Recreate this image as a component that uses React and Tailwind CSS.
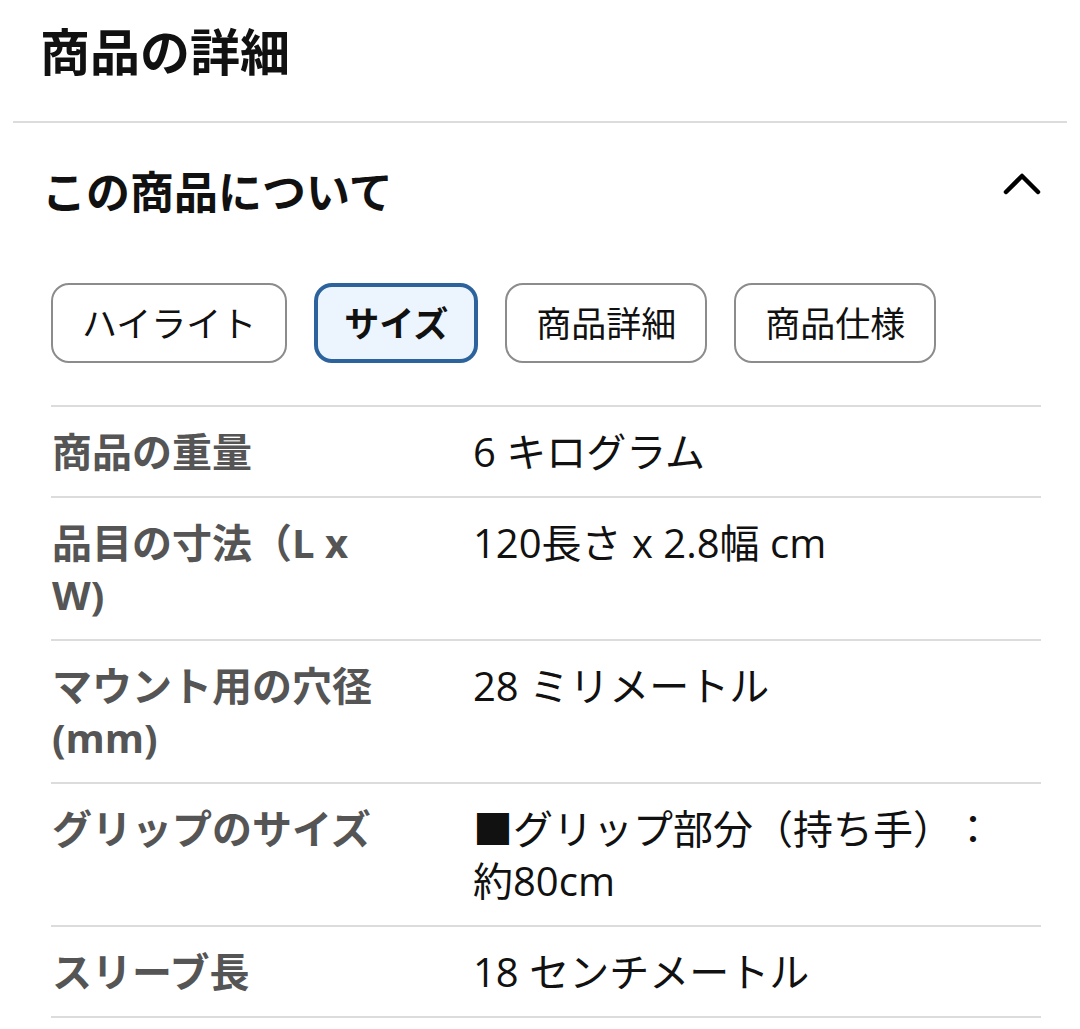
import React from 'react';

const FONT = '"Noto Sans CJK JP", "Noto Sans", sans-serif';
const TABLE_FONT = '"Open Sans", "Noto Sans CJK JP", sans-serif';

const tabs = [
    { label: 'ハイライト', active: false },
    { label: 'サイズ', active: true },
    { label: '商品詳細', active: false },
    { label: '商品仕様', active: false },
];

const rows = [
    { label: '商品の重量', value: '6 キログラム' },
    { label: '品目の寸法（L x W)', value: '120長さ x 2.8幅 cm' },
    { label: 'マウント用の穴径 (mm)', value: '28 ミリメートル' },
    { label: 'グリップのサイズ', value: '■グリップ部分（持ち手）：約80cm' },
    { label: 'スリーブ長', value: '18 センチメートル' },
];

// ─── CHEVRON ──────────────────────────────────────────────────────────────────

function ChevronUp() {
    return (
        <svg width="40" height="24" viewBox="0 0 40 24" fill="none">
            <path d="M3 20 L19 4 L35 20" stroke="#000" strokeWidth="4.5" strokeLinecap="round" strokeLinejoin="round" />
        </svg>
    );
}

// ─── MAIN COMPONENT ───────────────────────────────────────────────────────────

export default function App() {
    return (
        <div className="w-[1080px] min-h-[1029px] bg-white px-[13px]" style={{ fontFamily: FONT }}>
            <h1 className="pt-[19px] pl-[27px] text-[50px] leading-[60px] font-bold text-[#111]">商品の詳細</h1>

            <div className="mt-[42px] h-[2px] bg-[#dcdcdc]" />

            <div className="mt-[39px] mb-[2px] flex items-center justify-between pl-[29px] pr-[24px]">
                <h2 className="text-[44px] leading-[56px] font-bold text-[#111]">この商品について</h2>
                <div className="-mt-3"><ChevronUp /></div>
            </div>

            <div className="mt-[65px] pl-[38px] flex gap-[27px]">
                {tabs.map((t) => (
                    <button
                        key={t.label}
                        className={`h-[80px] flex items-center pb-1 rounded-[18px] text-[35px] leading-none text-[#111] ${t.active ? 'border-4 border-[#2c639c] bg-[#ecf5fd] px-[26px] font-bold' : 'border-2 border-[#8c8c8c] bg-white px-[29px]'}`}
                    >
                        {t.label}
                    </button>
                ))}
            </div>

            <div className="mt-[42px] ml-[38px] mr-[26px] border-t-2 border-[#dcdcdc]" style={{ fontFamily: TABLE_FONT }}>
                {rows.map((r) => (
                    <div key={r.label} className="flex pt-[19px] pb-[18px] border-b-2 border-[#dcdcdc] text-[40px] leading-[52px] [text-spacing-trim:space-all]">
                        <div className="w-[422px] pl-[1px] shrink-0">
                            <div className="w-[340px] font-bold text-[#555]">{r.label}</div>
                        </div>
                        <div className="w-[530px] text-[#111]">{r.value}</div>
                    </div>
                ))}
            </div>
        </div>
    );
}
